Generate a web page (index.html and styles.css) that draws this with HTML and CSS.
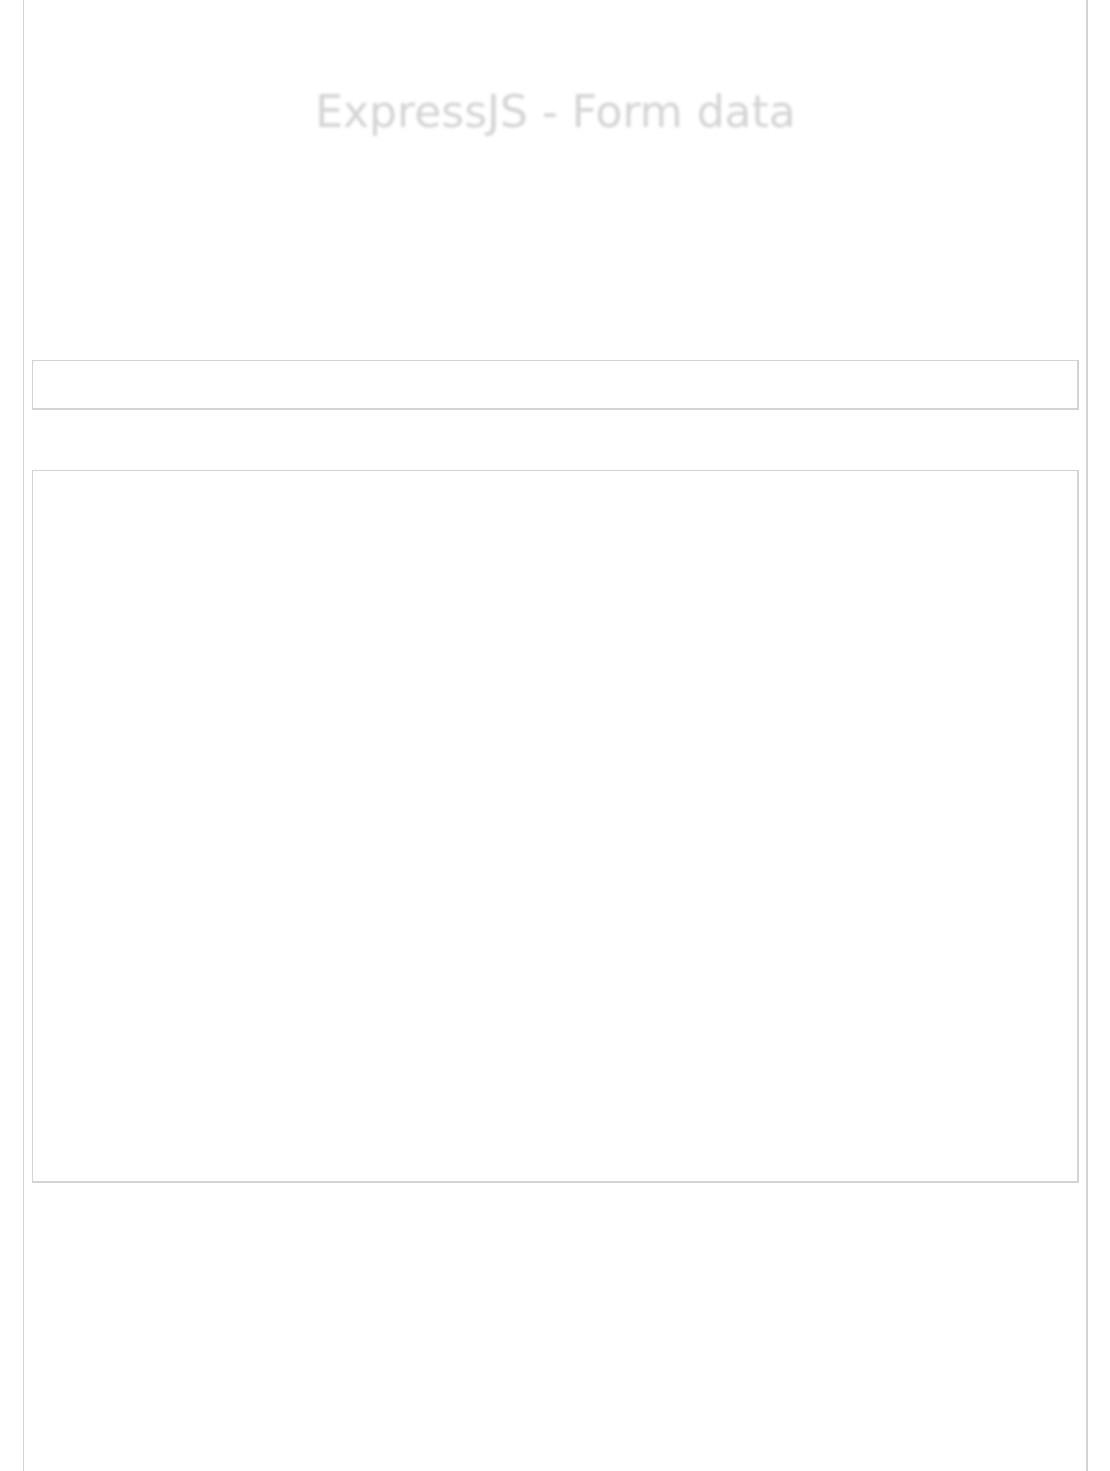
FILE: index.html
```html
<!DOCTYPE html>
<html lang="en">
  <head>
    <meta charset="UTF-8" />
    <meta name="viewport" content="width=device-width, initial-scale=1.0" />
    <title>ExpressJS - Form data</title>
    <link rel="stylesheet" href="styles.css">
  </head>
  <body>
    <div class="container">
      <h1>ExpressJS - Form data</h1>
      <form id="dataForm" class="data-form">
        <input type="text" id="name" name="name" class="field" />
        <textarea id="message" name="message" class="area"></textarea>
      </form>
    </div>
  </body>
</html>
```

FILE: styles.css
```css
* {
  margin: 0;
  padding: 0;
  box-sizing: border-box;
}
body {
  background-color: #fff;
  font-family: "DejaVu Sans", Verdana, sans-serif;
}
.container {
  margin: 0 22px 0 23px;
  min-height: 1471px;
  padding: 86px 7px 0 8px;
  border-left: 1px solid #d3d3d3;
  border-right: 2px solid #d3d3d3;
}
h1 {
  font-size: 44px;
  font-weight: normal;
  line-height: 52px;
  text-align: center;
  color: #d4d4d4;
  filter: blur(1.4px);
}
.data-form {
  display: flex;
  flex-direction: column;
  margin-top: 222px;
  gap: 60px;
}
.field,
.area {
  display: block;
  width: 100%;
  border-style: solid;
  border-color: #d3d3d3;
  border-width: 1px 2px 2px 1px;
  background: #fff;
  outline: none;
  resize: none;
}
.field {
  height: 50px;
}
.area {
  height: 713px;
}
```
